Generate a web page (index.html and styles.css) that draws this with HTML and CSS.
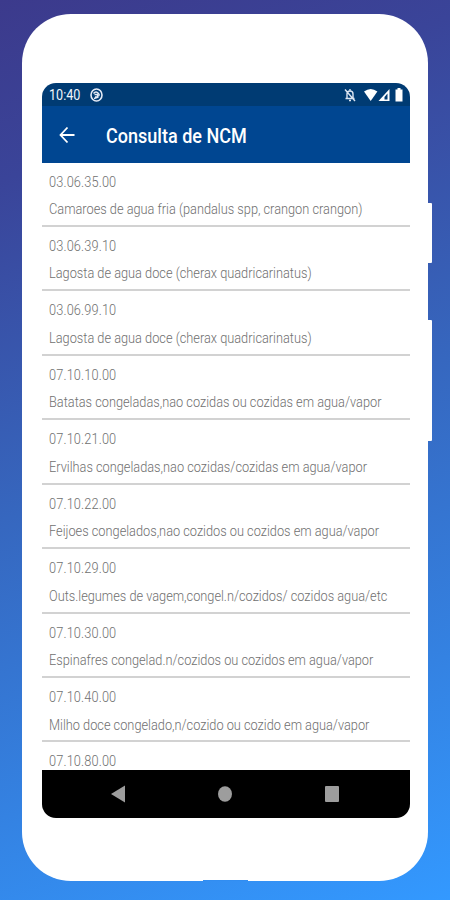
FILE: index.html
```
<!DOCTYPE html>
<html lang="pt-BR">
<head>
<meta charset="utf-8">
<title>Consulta de NCM</title>
<link rel="stylesheet" href="styles.css">
</head>
<body>
<div class="phone">
  <i class="side power"></i><i class="side volume"></i><i class="port"></i>
  <main class="screen">
    <div class="status">
      <span class="time">10:40</span>
      <svg class="sync" width="13" height="14" viewBox="0 0 13 14" fill="none" stroke="#e4eaf5"><ellipse cx="6.5" cy="7" rx="5.5" ry="6" stroke-width="1.6"/><path d="M3.5 5.5Q6 2.5 8.5 5.5T5 9M4.5 6.5h3v3M4 10.5l4.5-1.5" stroke-width="1.4"/></svg>
      <svg class="bell" width="12" height="14" viewBox="0 0 12 14" fill="none" stroke="#dce5f2" stroke-width="1.4"><path d="M3 10V6Q3 3 6 3t3 3v4M1.5 10.5h9M5 12.5h2M6 1v2M1 1.5l10 11.5"/></svg>
      <svg class="signals" width="40" height="14" viewBox="0 0 40 14" fill="#fff"><path d="M0 3.5Q6.7-1.5 13.4 3.5L6.7 13z"/><path d="M25.5 1v12H14.5z"/><path d="M23.5 5.5v6h-3V9z" fill="#003b73"/><path d="M31.5 1.5h2V0h3v1.5h2V13.5h-7V1.5z"/></svg>
    </div>
    <header class="appbar">
      <svg width="16" height="18" viewBox="0 0 16 18" fill="none" stroke="#fff" stroke-width="1.8"><path d="M15.5 9H1.7M8.5 1.5L1.5 9l7 7.5"/></svg>
      <h1>Consulta de NCM</h1>
    </header>
    <ul class="list">
      <li><b>03.06.35.00</b><span>Camaroes de agua fria (pandalus spp, crangon crangon)</span></li>
      <li><b>03.06.39.10</b><span>Lagosta de agua doce (cherax quadricarinatus)</span></li>
      <li><b>03.06.99.10</b><span>Lagosta de agua doce (cherax quadricarinatus)</span></li>
      <li><b>07.10.10.00</b><span>Batatas congeladas,nao cozidas ou cozidas em agua/vapor</span></li>
      <li><b>07.10.21.00</b><span>Ervilhas congeladas,nao cozidas/cozidas em agua/vapor</span></li>
      <li><b>07.10.22.00</b><span>Feijoes congelados,nao cozidos ou cozidos em agua/vapor</span></li>
      <li><b>07.10.29.00</b><span>Outs.legumes de vagem,congel.n/cozidos/ cozidos agua/etc</span></li>
      <li><b>07.10.30.00</b><span>Espinafres congelad.n/cozidos ou cozidos em agua/vapor</span></li>
      <li><b>07.10.40.00</b><span>Milho doce congelado,n/cozido ou cozido em agua/vapor</span></li>
      <li><b>07.10.80.00</b></li>
    </ul>
    <nav class="nav">
      <svg width="14" height="18" viewBox="0 0 14 18" fill="#9d9d9d"><path d="M14 .5v17L0 9z"/></svg>
      <svg width="14" height="16" viewBox="0 0 14 16" fill="#9d9d9d"><ellipse cx="7" cy="8" rx="7" ry="7.7"/></svg>
      <svg width="14" height="16" viewBox="0 0 14 16" fill="#9d9d9d"><rect width="14" height="16" rx="1"/></svg>
    </nav>
  </main>
</div>
</body>
</html>
```
FILE: styles.css
```
* { box-sizing: border-box; }
body {
  margin: 0;
  height: 900px;
  overflow: hidden;
  padding: 14px 0 0 22px;
  background: linear-gradient(160deg, #3c3a8c 0%, #3a4499 17%, #3667bf 49%, #3482e2 77%, #3399ff 100%);
  font-family: Roboto, sans-serif;
}
.phone {
  position: relative;
  width: 406px;
  height: 867px;
  padding: 69px 18px 0 20px;
  background: #fff;
  border-radius: 49px;
}
.side { position: absolute; right: -4px; width: 6px; background: #fff; border-radius: 0 1px 1px 0; }
.power { top: 189px; height: 60px; }
.volume { top: 306px; height: 121px; }
.port { position: absolute; left: 181px; bottom: 0; width: 45px; height: 1px; background: #318df1; }
.screen {
  display: flex;
  flex-direction: column;
  width: 367.5px;
  height: 735px;
  overflow: hidden;
  border-radius: 14px;
}
.status {
  display: flex;
  align-items: center;
  height: 23px;
  flex: none;
  padding: 1px 6px 0 7px;
  background: #003b73;
  color: #f1f5fb;
}
.time { width: 41px; font-size: 14.5px; transform: scaleX(.87); transform-origin: 0 50%; }
.bell { margin: 0 8px 0 auto; }
.appbar {
  display: flex;
  align-items: center;
  height: 56.5px;
  flex: none;
  padding: 2px 0 0 17px;
  background: #004691;
}
h1 {
  margin: 1px 0 0 31px;
  color: #fff;
  font-size: 20.5px;
  font-weight: 500;
  white-space: nowrap;
  transform: scaleX(.88);
  transform-origin: 0 50%;
}
.list {
  flex: 1;
  min-height: 0;
  overflow: hidden;
  margin: 0;
  padding: 0;
  list-style: none;
  background: #fff;
}
li {
  height: 64.45px;
  padding: 9px 0 0 7px;
  border-bottom: 2px solid #d2d2d2;
  color: #707070;
  font-size: 14.2px;
  white-space: nowrap;
}
li b, li span {
  display: block;
  width: max-content;
  height: 20px;
  line-height: 20px;
  font-weight: 300;
  transform: scaleX(.9);
  transform-origin: 0 50%;
}
li b { letter-spacing: .15px; }
li span { margin-top: 7.5px; }
.nav {
  display: flex;
  align-items: center;
  justify-content: space-between;
  height: 48px;
  flex: none;
  padding: 0 71px 0 69px;
  background: #000;
}
```
